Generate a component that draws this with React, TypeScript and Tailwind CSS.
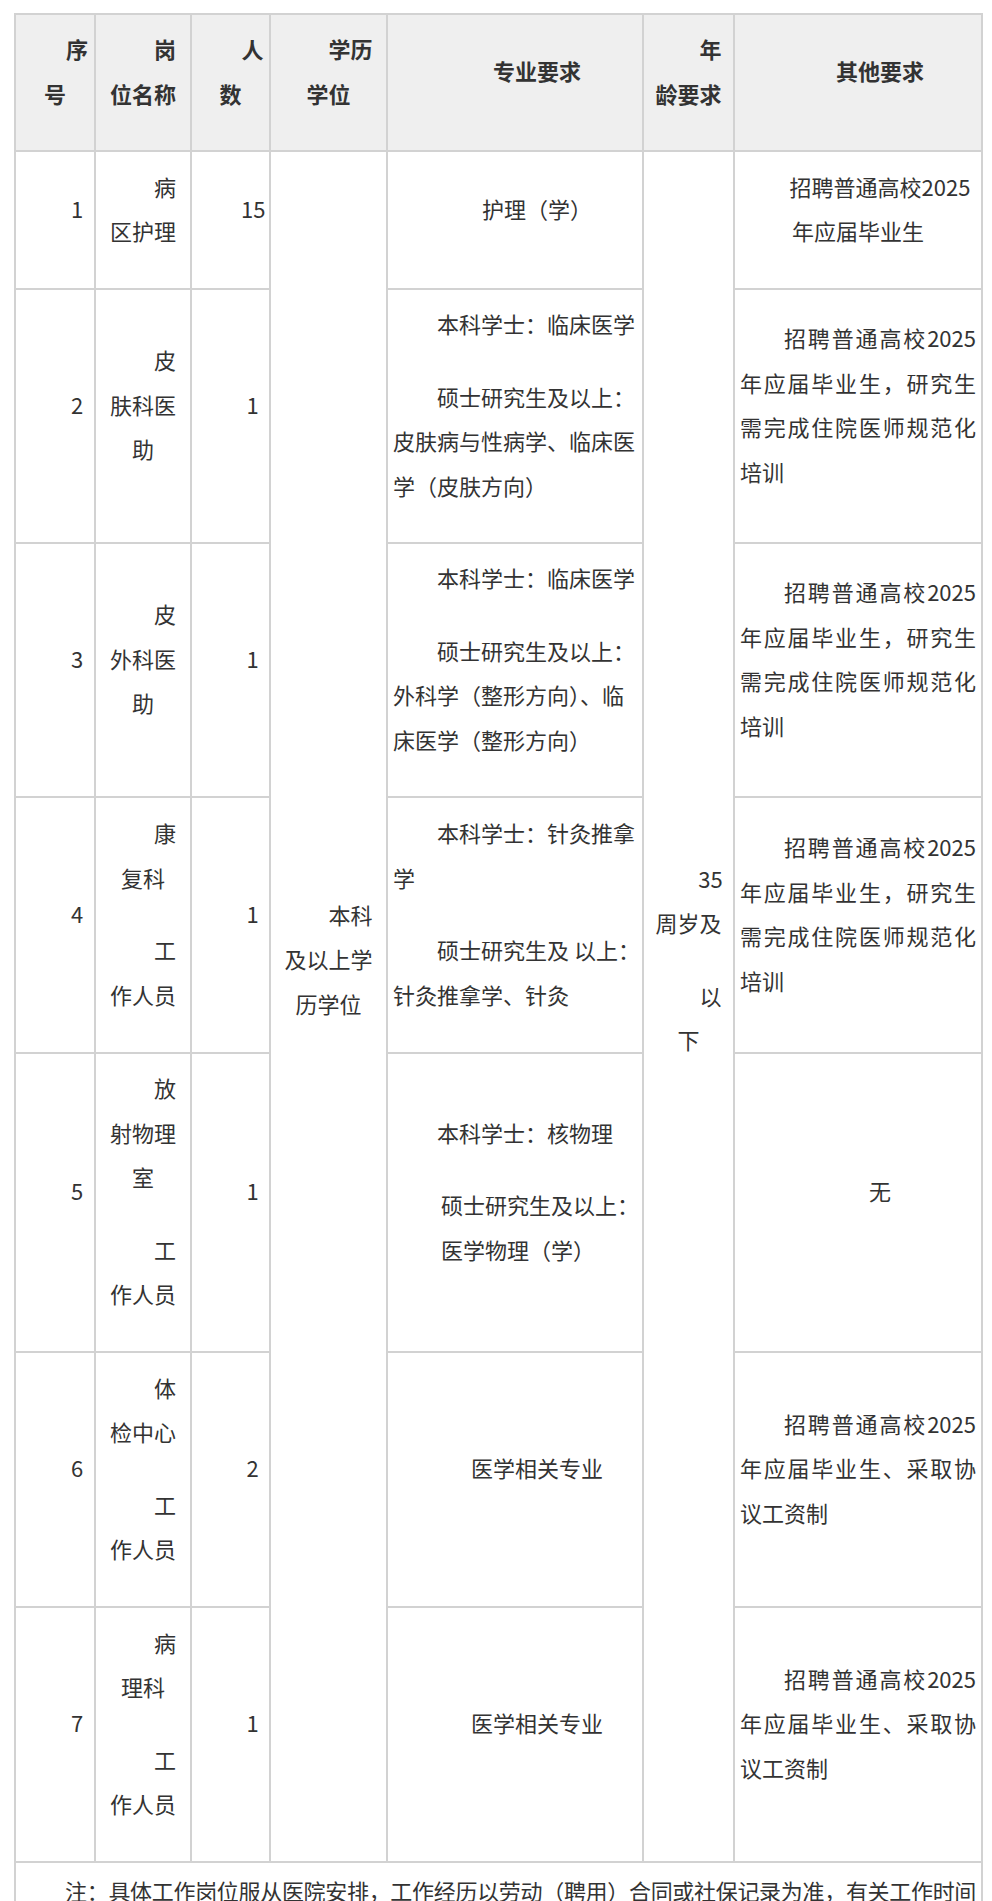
type Align = 'center' | 'left' | 'justify';
type Para = { lines: string[]; indent?: boolean; cls?: string };
type Block = { align: Align; paras: Para[] };

const alignCls: Record<Align, string> = {
  center: 'text-center',
  left: 'text-left',
  justify: 'text-justify',
};

function Lines({ block }: { block: Block }) {
  return (
    <>
      {block.paras.map((p, i) => (
        <div key={i} className={`${i > 0 ? 'mt-[28px]' : ''} ${p.cls ?? ''}`}>
          {p.lines.map((line, j) => {
            const indent = j === 0 && p.indent !== false;
            const spread = block.align === 'justify' && j < p.lines.length - 1;
            return (
              <div
                key={j}
                className={`whitespace-nowrap ${alignCls[block.align]} ${indent ? 'indent-[2em]' : ''} ${
                  spread ? '[text-align-last:justify]' : ''
                }`}
              >
                {line}
              </div>
            );
          })}
        </div>
      ))}
    </>
  );
}

const c = (...lines: string[]): Block => ({ align: 'center', paras: [{ lines }] });

type Row = {
  no: string;
  name: Block;
  num: string;
  major: Block;
  other: Block;
  h: string;
};

const otherLong: Block = {
  align: 'justify',
  paras: [{ lines: ['招聘普通高校2025', '年应届毕业生，研究生', '需完成住院医师规范化', '培训'] }],
};

const otherContract: Block = {
  align: 'justify',
  paras: [{ lines: ['招聘普通高校2025', '年应届毕业生、采取协', '议工资制'] }],
};

const staff: Para = { lines: ['工', '作人员'] };

const rows: Row[] = [
  {
    no: '1',
    name: c('病', '区护理'),
    num: '15',
    major: c('护理（学）'),
    other: c('招聘普通高校2025', '年应届毕业生'),
    h: 'h-[138px]',
  },
  {
    no: '2',
    name: c('皮', '肤科医', '助'),
    num: '1',
    major: {
      align: 'left',
      paras: [
        { lines: ['本科学士：临床医学'] },
        { lines: ['硕士研究生及以上：', '皮肤病与性病学、临床医', '学（皮肤方向）'] },
      ],
    },
    other: otherLong,
    h: 'h-[254px]',
  },
  {
    no: '3',
    name: c('皮', '外科医', '助'),
    num: '1',
    major: {
      align: 'left',
      paras: [
        { lines: ['本科学士：临床医学'] },
        { lines: ['硕士研究生及以上：', '外科学（整形方向）、临', '床医学（整形方向）'] },
      ],
    },
    other: otherLong,
    h: 'h-[254px]',
  },
  {
    no: '4',
    name: { align: 'center', paras: [{ lines: ['康', '复科'] }, staff] },
    num: '1',
    major: {
      align: 'left',
      paras: [
        { lines: ['本科学士：针灸推拿', '学'] },
        { lines: ['硕士研究生及 以上：', '针灸推拿学、针灸'] },
      ],
    },
    other: otherLong,
    h: 'h-[256px]',
  },
  {
    no: '5',
    name: { align: 'center', paras: [{ lines: ['放', '射物理', '室'] }, staff] },
    num: '1',
    major: {
      align: 'left',
      paras: [
        { lines: ['本科学士：核物理'] },
        { lines: ['硕士研究生及以上：', '医学物理（学）'], indent: false, cls: 'pl-[48px]' },
      ],
    },
    other: c('无'),
    h: 'h-[299px]',
  },
  {
    no: '6',
    name: { align: 'center', paras: [{ lines: ['体', '检中心'] }, staff] },
    num: '2',
    major: c('医学相关专业'),
    other: otherContract,
    h: 'h-[255px]',
  },
  {
    no: '7',
    name: { align: 'center', paras: [{ lines: ['病', '理科'] }, staff] },
    num: '1',
    major: c('医学相关专业'),
    other: otherContract,
    h: 'h-[255px]',
  },
];

const cell = 'border-2 border-[#d2d2d2] px-[5px] pt-[5px] pb-[29px] align-middle';

export default function App() {
  return (
    <div
      className="w-[992px] h-[1901px] overflow-hidden bg-white pt-[13px] pl-[14px] text-[#333333] text-[22px] leading-[44.5px]"
      style={{ fontFamily: '"Noto Sans CJK SC", "Noto Sans", sans-serif' }}
    >
      <table className="table-fixed border-collapse w-[967px]">
        <colgroup>
          <col className="w-[80px]" />
          <col className="w-[96px]" />
          <col className="w-[79px]" />
          <col className="w-[117px]" />
          <col className="w-[256px]" />
          <col className="w-[91px]" />
          <col className="w-[248px]" />
        </colgroup>
        <thead>
          <tr className="h-[137px] bg-[#efefef] font-bold">
            <th className={cell}>
              <Lines block={c('序', '号')} />
            </th>
            <th className={cell}>
              <Lines block={c('岗', '位名称')} />
            </th>
            <th className={cell}>
              <Lines block={c('人', '数')} />
            </th>
            <th className={cell}>
              <Lines block={c('学历', '学位')} />
            </th>
            <th className={cell}>
              <Lines block={c('专业要求')} />
            </th>
            <th className={cell}>
              <Lines block={c('年', '龄要求')} />
            </th>
            <th className={cell}>
              <Lines block={c('其他要求')} />
            </th>
          </tr>
        </thead>
        <tbody>
          {rows.map((r, i) => (
            <tr key={r.no} className={r.h}>
              <td className={cell}>
                <Lines block={c(r.no)} />
              </td>
              <td className={cell}>
                <Lines block={r.name} />
              </td>
              <td className={cell}>
                <Lines block={c(r.num)} />
              </td>
              {i === 0 && (
                <td rowSpan={7} className="border-2 border-[#d2d2d2] px-[5px] pt-[5px] pb-[101px] align-middle">
                  <Lines block={c('本科', '及以上学', '历学位')} />
                </td>
              )}
              <td className={cell}>
                <Lines block={r.major} />
              </td>
              {i === 0 && (
                <td rowSpan={7} className="border-2 border-[#d2d2d2] px-[5px] pt-[5px] pb-[101px] align-middle">
                  <Lines block={{ align: 'center', paras: [{ lines: ['35', '周岁及'] }, { lines: ['以', '下'] }] }} />
                </td>
              )}
              <td className={cell}>
                <Lines block={r.other} />
              </td>
            </tr>
          ))}
          <tr>
            <td colSpan={7} className="border-2 border-[#d2d2d2] px-[5px] pt-[5px] pb-[29px] align-top">
              <div className="whitespace-nowrap indent-[2em] text-justify [text-align-last:justify] tracking-[-0.35px]">
                注：具体工作岗位服从医院安排，工作经历以劳动（聘用）合同或社保记录为准，有关工作时间
              </div>
            </td>
          </tr>
        </tbody>
      </table>
    </div>
  );
}
